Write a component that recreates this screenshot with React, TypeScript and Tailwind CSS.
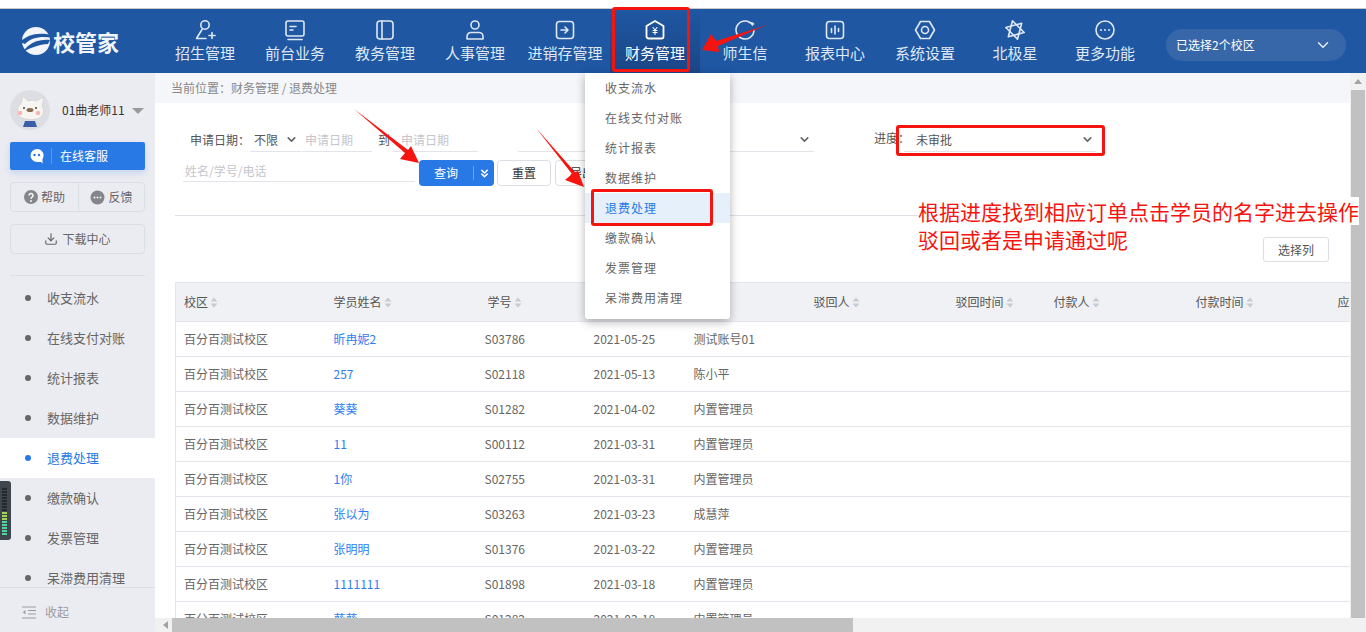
import type { ReactNode } from "react";
import { ChevronDown, ChevronsDown, Download } from "lucide-react";

const FONT = "font-['Noto_Sans_CJK_SC','Liberation_Sans',sans-serif]";

function NavIcon({ children }: { children: ReactNode }) {
  return (
    <svg width="22" height="22" viewBox="0 0 22 22" fill="none" stroke="#dfe7f3" strokeWidth="1.6" strokeLinecap="round" strokeLinejoin="round">
      {children}
    </svg>
  );
}

const navItems: { label: string; icon: ReactNode; active?: boolean }[] = [
  {
    label: "招生管理",
    icon: (
      <>
        <circle cx="11" cy="6" r="4.2" />
        <path d="M8 10.5 2.5 19.5H12M15 16.5h6M18 13.5v6" />
      </>
    ),
  },
  {
    label: "前台业务",
    icon: (
      <>
        <rect x="2" y="2" width="18" height="15" rx="2" />
        <path d="M6 7.5h6M6 11h3M4 20.5h14" />
      </>
    ),
  },
  {
    label: "教务管理",
    icon: (
      <>
        <rect x="3" y="2" width="16" height="18" rx="3" />
        <path d="M8 2v18" />
      </>
    ),
  },
  {
    label: "人事管理",
    icon: (
      <>
        <circle cx="11" cy="6" r="4" />
        <path d="M3 20v-2.5a4 4 0 0 1 4-4h8a4 4 0 0 1 4 4V20z" />
      </>
    ),
  },
  {
    label: "进销存管理",
    icon: (
      <>
        <rect x="2.5" y="2.5" width="17" height="17" rx="3" />
        <path d="M7 11h7M11 8l3 3-3 3" />
      </>
    ),
  },
  {
    label: "财务管理",
    active: true,
    icon: (
      <>
        <path d="M11 2 19.5 7v10.500a2 2 0 0 1-2 2h-13a2 2 0 0 1-2-2V7z" strokeWidth="1.8" stroke="#fff" />
        <path d="M9 8.500 11 11l2-2.500M9 11.500h4M9 13.500h4M11 11v4.500" strokeWidth="1.100" stroke="#fff" />
      </>
    ),
  },
  {
    label: "师生信",
    icon: (
      <>
        <path d="M18.500 6A9 9 0 1 0 20 11" />
        <path d="M15 3.500c2 0 4 .5 4.500 1.500" />
      </>
    ),
  },
  {
    label: "报表中心",
    icon: (
      <>
        <rect x="2.500" y="2.500" width="17" height="17" rx="3" />
        <path d="M7.500 9.500v4M11 7v8M14.500 9.500v3" />
      </>
    ),
  },
  {
    label: "系统设置",
    icon: (
      <>
        <path d="M6.500 2.500h9L20.500 11l-5 8.500h-9L1.500 11z" />
        <circle cx="11" cy="11" r="3.500" />
      </>
    ),
  },
  {
    label: "北极星",
    icon: (
      <>
        <path d="M8.500 1.800 20.200 13.500 4.300 17.700z" />
        <path d="M13.500 20.200 1.800 8.500 17.700 4.300z" />
      </>
    ),
  },
  {
    label: "更多功能",
    icon: (
      <>
        <circle cx="11" cy="11" r="9" />
        <path d="M7 11h.01M11 11h.01M15 11h.01" strokeWidth="2" />
      </>
    ),
  },
];

const sideItems = ["收支流水", "在线支付对账", "统计报表", "数据维护", "退费处理", "缴款确认", "发票管理", "呆滞费用清理"];

const rows = [
  ["昕冉妮2", "S03786", "2021-05-25", "测试账号01"],
  ["257", "S02118", "2021-05-13", "陈小平"],
  ["葵葵", "S01282", "2021-04-02", "内置管理员"],
  ["11", "S00112", "2021-03-31", "内置管理员"],
  ["1你", "S02755", "2021-03-31", "内置管理员"],
  ["张以为", "S03263", "2021-03-23", "成慧萍"],
  ["张明明", "S01376", "2021-03-22", "内置管理员"],
  ["1111111", "S01898", "2021-03-18", "内置管理员"],
  ["葵葵", "S01282", "2021-03-18", "内置管理员"],
];

const columns = ["校区", "学员姓名", "学号", "", "", "驳回人", "驳回时间", "付款人", "付款时间", "应收"];

function Sort() {
  return (
    <svg width="8" height="11" viewBox="0 0 8 11" className="ml-[2px] shrink-0" fill="#c8cbd2">
      <path d="M4 0.500 7.500 4.500H0.500zM4 10.500 0.500 6.500H7.500z" />
    </svg>
  );
}

function UnderSelect({ text, className }: { text: string; className: string }) {
  return (
    <div className={`flex items-center justify-between border-b border-[#e2e4ea] h-[24px] text-[12px] text-[#555] ${className}`}>
      <span>{text}</span>
      <ChevronDown size={13} strokeWidth={3} className="text-[#666]" />
    </div>
  );
}

function DateInput({ className }: { className: string }) {
  return <div className={`border-b border-[#e2e4ea] h-[24px] text-[12px] leading-[24px] text-[#c4c6cc] ${className}`}>申请日期</div>;
}

function Avatar() {
  return (
    <svg width="40" height="40" viewBox="0 0 40 40" className="shrink-0">
      <circle cx="20" cy="20" r="20" fill="#dcdee4" />
      <path d="M8 25c-1-5 0-9 3-12l2-7 5 5c3-1 6-1 8 0l8-4-2 9c2 3 2 7 0 10-4 5-20 5-24-1z" fill="#f7f5f1" stroke="#cfc9c2" strokeWidth=".6" />
      <ellipse cx="20" cy="20" rx="3.500" ry="2" fill="#8a6a50" />
      <circle cx="14" cy="18" r="1" fill="#444" />
      <circle cx="26" cy="18" r="1" fill="#444" />
      <circle cx="10" cy="23" r="2.200" fill="#f9b4b4" />
      <circle cx="28" cy="23" r="2.200" fill="#f9b4b4" />
      <path d="M15 31h10l2 6H13z" fill="#3c5ea8" />
    </svg>
  );
}

export default function App() {
  return (
    <div className={`${FONT} relative w-[1366px] h-[632px] overflow-hidden bg-white flex flex-col`}>
      <div className="h-[9px] shrink-0 bg-white border-b border-[#c9c9c9]" />

      <header className="h-[64px] shrink-0 bg-[#1f57a3] flex">
        <div className="w-[160px] flex items-center pl-[20px]">
          <svg width="33" height="30" viewBox="0 0 33 30">
            <circle cx="16" cy="15" r="14" fill="#f2f5fa" />
            <path d="M0 16C8 8 18 6 32 9l1 3C22 10 12 11 5 18z" fill="#1f57a3" />
            <path d="M30 14C22 13 14 15 8 20l-7 7c6-3 9-5 13-6 5-2 10-3 14-3z" fill="#1f57a3" />
          </svg>
          <span className="text-[22px] leading-none font-bold text-[#f2f5fa]">校管家</span>
        </div>
        {navItems.map((item) => (
          <div
            key={item.label}
            className={`w-[90px] flex flex-col items-center pt-[10px] ${item.active ? "bg-gradient-to-b from-[#1f57a3] to-[#1a4686]" : ""}`}
          >
            <NavIcon>{item.icon}</NavIcon>
            <span className={`mt-[2px] text-[15px] leading-[20px] whitespace-nowrap ${item.active ? "text-white" : "text-[#dfe7f3]"}`}>{item.label}</span>
          </div>
        ))}
        <div className="ml-[16px] mt-[20px] w-[180px] h-[32px] rounded-full bg-[#3767a9] flex items-center justify-between pl-[10px] pr-[14px] text-[12px] text-white">
          <span>已选择2个校区</span>
          <ChevronDown size={18} className="text-[#e6edf6]" />
        </div>
      </header>

      <div className="flex-1 flex min-h-0">
        <aside className="w-[155px] shrink-0 bg-[#ebecf1] flex flex-col">
          <div className="flex items-center px-[10px] pt-[17px]">
            <Avatar />
            <span className="ml-[12px] text-[12px] text-[#333] whitespace-nowrap">01曲老师11</span>
            <span className="ml-[7px] mt-[2px] w-0 h-0 border-x-[6px] border-x-transparent border-t-[6px] border-t-[#999]" />
          </div>
          <div className="mx-[10px] mt-[12px] h-[28px] rounded-[2px] bg-[#2878e6] shadow-[0_3px_6px_rgba(40,120,230,0.2)] flex items-center text-white text-[12px]">
            <svg width="16" height="16" viewBox="0 0 16 16" className="ml-[19px]">
              <path d="M8 1a6.500 6.500 0 0 0 0 13h4l1.500 1.500V11A6.500 6.500 0 0 0 8 1z" fill="#fff" />
              <circle cx="5.500" cy="7" r="1.200" fill="#2878e6" />
              <circle cx="10" cy="7" r="1.200" fill="#2878e6" />
            </svg>
            <span className="ml-[6px] w-px h-[16px] bg-[#5a98ec]" />
            <span className="ml-[8px]">在线客服</span>
          </div>
          <div className="mx-[10px] mt-[12px] h-[30px] rounded-[4px] border border-[#dcdee5] flex text-[12px] text-[#666]">
            <div className="w-[68px] flex items-center justify-center gap-[3px] border-r border-[#dcdee5]">
              <svg width="14" height="14" viewBox="0 0 14 14">
                <circle cx="7" cy="7" r="7" fill="#85868c" />
                <path d="M5 5.500a2 2 0 1 1 3 1.700c-.7.400-1 .8-1 1.600" fill="none" stroke="#fff" strokeWidth="1.400" />
                <circle cx="7" cy="11" r=".9" fill="#fff" />
              </svg>
              帮助
            </div>
            <div className="flex-1 flex items-center justify-center gap-[3px]">
              <svg width="15" height="15" viewBox="0 0 15 15">
                <circle cx="7.500" cy="7.500" r="7" fill="#85868c" />
                <circle cx="4.500" cy="7.500" r=".9" fill="#fff" />
                <circle cx="7.500" cy="7.500" r=".9" fill="#fff" />
                <circle cx="10.500" cy="7.500" r=".9" fill="#fff" />
              </svg>
              反馈
            </div>
          </div>
          <div className="mx-[10px] mt-[12px] h-[30px] rounded-[4px] border border-[#dcdee5] flex items-center justify-center gap-[4px] text-[12px] text-[#666]">
            <Download size={14} />
            下载中心
          </div>
          <div className="mx-[10px] mt-[21px] border-t border-[#dcdee5]" />
          <div className="flex-1 min-h-0 overflow-hidden pt-[2px]">
            {sideItems.map((name) => {
              const on = name === "退费处理";
              return (
                <div key={name} className={`h-[40px] flex items-center pl-[25px] text-[13px] ${on ? "bg-white text-[#2878e6]" : "text-[#666]"}`}>
                  <span className={`w-[6px] h-[6px] rounded-full ${on ? "bg-[#2878e6]" : "bg-[#666]"}`} />
                  <span className="ml-[16px] whitespace-nowrap">{name}</span>
                </div>
              );
            })}
          </div>
          <div className="h-[45px] shrink-0 border-t border-[#dcdee5] flex items-center pl-[22px] pt-[4px] text-[12px] text-[#9a9ca3]">
            <svg width="14" height="13" viewBox="0 0 14 13" fill="none" stroke="#9a9ca3" strokeWidth="1.200">
              <path d="M0 1h14M6 4.500h8M6 8h8M0 12h14" />
              <path d="M3.500 4 .8 6.300l2.700 2.300z" fill="#9a9ca3" stroke="none" />
            </svg>
            <span className="ml-[9px]">收起</span>
          </div>
        </aside>

        <div className="flex-1 min-w-0 flex flex-col">
          <div className="flex-1 min-h-0 overflow-hidden flex flex-col">
            <div className="h-[30px] shrink-0 bg-[#f5f6fa] pl-[16px] text-[12px] leading-[30px] text-[#888]">当前位置：财务管理 / 退费处理</div>
            <div className="flex-1 min-h-0 bg-white flex flex-col">
              <div className="mt-[22px] h-[27px] flex items-end text-[12px] text-[#555]">
                <span className="ml-[35px] mb-[3px] w-[60px]">申请日期：</span>
                <UnderSelect text="不限" className="w-[51px] pl-[4px] pr-[3px]" />
                <DateInput className="w-[70px] ml-px pl-[3px]" />
                <span className="ml-[6px] mb-[3px]">到</span>
                <DateInput className="w-[85px] ml-[3px] pl-[8px]" />
                <UnderSelect text="" className="w-[296px] ml-[40px] pr-[3px]" />
                <span className="ml-[60px] mb-[5px]">进度：</span>
                <UnderSelect text="未审批" className="w-[192px] ml-[-6px] pl-[12px] pr-[2px]" />
              </div>
              <div className="mt-[8px] h-[26px] flex text-[12px]">
                <div className="ml-[28px] w-[232px] h-[22px] border-b border-[#e2e4ea] pl-[2px] text-[#c4c6cc] leading-[22px]">姓名/学号/电话</div>
                <div className="ml-[4px] w-[75px] rounded-[4px] bg-[#2878e6] text-white flex items-center">
                  <span className="w-[54px] text-center">查询</span>
                  <span className="h-[14px] w-px bg-[#6ba3ee]" />
                  <ChevronsDown size={13} strokeWidth={3} className="ml-[4px]" />
                </div>
                <div className="ml-[3px] w-[54px] rounded-[4px] border border-[#dcdee5] text-[#333] flex items-center justify-center">重置</div>
                <div className="ml-[4px] w-[54px] rounded-[4px] border border-[#dcdee5] text-[#333] flex items-center justify-center">导出</div>
              </div>
              <div className="mt-[29px] ml-[20px] h-px bg-[#dfe1e6]" />
              <div className="mt-[21px] mr-[21px] flex justify-end">
                <div className="w-[66px] h-[25px] rounded-[3px] border border-[#dcdee5] text-[12px] text-[#555] flex items-center justify-center">选择列</div>
              </div>
              <div className="mt-[20px] ml-[20px] flex-1 min-h-0 overflow-hidden">
                <table className="table-fixed w-[1400px] border-collapse text-[12px] text-[#666]">
                  <colgroup>
                    <col className="w-[150px]" />
                    <col className="w-[151px]" />
                    <col className="w-[109px]" />
                    <col className="w-[100px]" />
                    <col className="w-[120px]" />
                    <col className="w-[142px]" />
                    <col className="w-[98px]" />
                    <col className="w-[142px]" />
                    <col className="w-[142px]" />
                    <col className="w-[246px]" />
                  </colgroup>
                  <thead>
                    <tr className="h-[39px] bg-[#eff1f5] border-y border-[#e3e5ec]">
                      {columns.map((c, i) => (
                        <th key={i} className={`text-left font-normal text-[#555] pl-[8px] ${i === 0 ? "border-l border-[#e3e5ec]" : ""}`}>
                          {c && (
                            <span className={`flex items-center whitespace-nowrap ${i === 2 ? "pl-[3px]" : ""}`}>
                              {c}
                              <Sort />
                            </span>
                          )}
                        </th>
                      ))}
                    </tr>
                  </thead>
                  <tbody>
                    {rows.map((r, i) => (
                      <tr key={i} className="h-[35px] border-b border-[#e3e5ec]">
                        <td className="pl-[8px] border-l border-[#e3e5ec]">百分百测试校区</td>
                        <td className="pl-[8px] text-[#2f7cf0]">{r[0]}</td>
                        <td className="pl-[8px]">{r[1]}</td>
                        <td className="pl-[8px]">{r[2]}</td>
                        <td className="pl-[8px]">{r[3]}</td>
                        <td colSpan={5} />
                      </tr>
                    ))}
                  </tbody>
                </table>
              </div>
            </div>
          </div>
          <div className="h-[14px] shrink-0 bg-[#f1f1f1] flex items-center">
            <span className="ml-[8px] w-0 h-0 border-y-[4px] border-y-transparent border-r-[5px] border-r-[#a3a3a3]" />
            <span className="ml-[4px] w-[681px] h-full bg-[#c1c1c1]" />
          </div>
        </div>

        <div className="w-[16px] shrink-0 bg-[#f1f1f1] flex flex-col items-center">
          <span className="mt-[6px] w-0 h-0 border-x-[4px] border-x-transparent border-b-[5px] border-b-[#a3a3a3]" />
          <span className="mt-[6px] w-[14px] flex-1 mb-[14px] bg-[#c1c1c1]" />
        </div>
      </div>

      {/* dropdown under 财务管理 */}
      <div className="absolute left-[585px] top-[73px] w-[145px] h-[246px] bg-white rounded-b-[3px] shadow-[0_3px_10px_rgba(0,0,0,0.3)] text-[12px] tracking-[1px] text-[#666]">
        {sideItems.map((name) => (
          <div key={name} className={`h-[30px] leading-[30px] pl-[20px] ${name === "退费处理" ? "bg-[#e6f0fb] text-[#2878e6]" : ""}`}>
            {name}
          </div>
        ))}
      </div>

      {/* level meter widget on the screen edge */}
      <div className="absolute left-0 top-[481px] w-[11px] h-[59px] rounded-r-[3px] bg-[#3f464d] flex flex-col gap-px pl-[2px] pt-[7px]">
        {Array.from({ length: 16 }).map((_, i) => (
          <span key={i} className={`w-[5px] h-[2px] ${i < 8 ? "bg-[#23282d]" : i < 11 ? "bg-[#a6d45a]" : "bg-[#4fd6a0]"}`} />
        ))}
      </div>

      {/* screenshot annotations */}
      <div className="absolute left-[612px] top-[7px] w-[78px] h-[65px] border-[3px] border-[#f5140f] rounded-[3px]" />
      <div className="absolute left-[591px] top-[189px] w-[122px] h-[37px] border-[3px] border-[#f5140f] rounded-[3px]" />
      <div className="absolute left-[896px] top-[125px] w-[209px] h-[31px] border-[3px] border-[#f5140f] rounded-[3px]" />
      <div className="absolute left-[918px] top-[197px] text-[21px] leading-[28px] text-[#f5140f] whitespace-nowrap">
        <div className="bg-white">根据进度找到相应订单点击学员的名字进去操作</div>
        <div>驳回或者是申请通过呢</div>
      </div>
      <svg className="absolute left-0 top-0 pointer-events-none" width="1366" height="632" fill="#f5140f">
        <polygon points="767,25 716,41 711,34 702,50 719,52 718,46" />
        <polygon points="354,109 405,153 400,159 419,163 411,146 408,150" />
        <polygon points="536,128 572,174 565,180 584,187 578,171 575,172" />
      </svg>
    </div>
  );
}
